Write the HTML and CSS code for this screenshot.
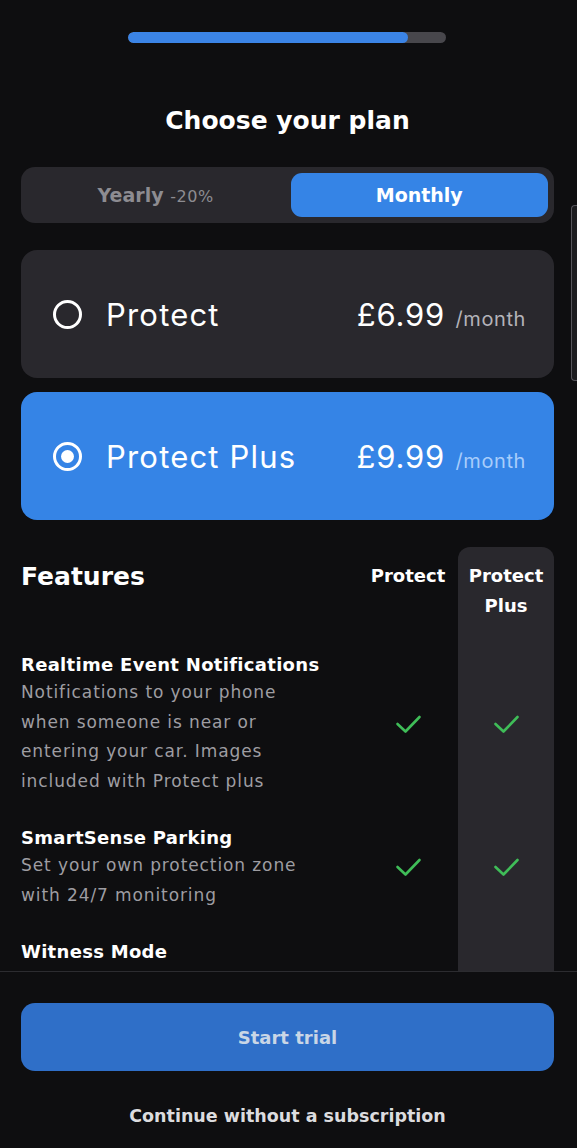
FILE: index.html
```html
<!DOCTYPE html>
<html lang="en">
<head>
    <meta charset="UTF-8" />
    <meta name="viewport" content="width=device-width, initial-scale=1.0"/>
    <title>Choose your plan</title>
    <link rel="stylesheet" href="styles.css">
</head>
<body>
<main class="screen">
    <div class="scroll-area">
        <div class="progress"><div class="progress-fill" style="width: 88%"></div></div>

        <h1>Choose your plan</h1>

        <section class="toggle">
            <button class="toggle-btn">Yearly <span class="discount">-20%</span></button>
            <button class="toggle-btn active">Monthly</button>
        </section>

        <section class="plans">
            <div class="plan">
                <span class="radio"></span>
                <span class="plan-name">Protect</span>
                <span class="plan-price">£6.99 <small>/month</small></span>
            </div>
            <div class="plan selected">
                <span class="radio"></span>
                <span class="plan-name">Protect Plus</span>
                <span class="plan-price">£9.99 <small>/month</small></span>
            </div>
        </section>

        <section class="features">
            <div class="plus-col"></div>

            <h2 class="features-title">Features</h2>
            <div class="col-head">Protect</div>
            <div class="col-head">Protect Plus</div>

            <div class="feature">
                <h3>Realtime Event Notifications</h3>
                <p>Notifications to your phone when someone is near or entering your car. Images included with Protect plus</p>
            </div>
            <div class="tick"><svg viewBox="0 0 26 20"><path d="M2 10 L10 17.5 L24 3"/></svg></div>
            <div class="tick"><svg viewBox="0 0 26 20"><path d="M2 10 L10 17.5 L24 3"/></svg></div>

            <div class="feature">
                <h3>SmartSense Parking</h3>
                <p>Set your own protection zone with 24/7 monitoring</p>
            </div>
            <div class="tick"><svg viewBox="0 0 26 20"><path d="M2 10 L10 17.5 L24 3"/></svg></div>
            <div class="tick"><svg viewBox="0 0 26 20"><path d="M2 10 L10 17.5 L24 3"/></svg></div>

            <div class="feature">
                <h3>Witness Mode</h3>
            </div>
            <div class="tick"></div>
            <div class="tick"></div>
        </section>

        <div class="scrollbar"></div>
    </div>

    <footer class="footer">
        <button class="start-btn">Start trial</button>
        <a class="skip-link">Continue without a subscription</a>
    </footer>
</main>
</body>
</html>
```

FILE: styles.css
```css
* {
    box-sizing: border-box;
    font-family: 'DejaVu Sans', sans-serif;
}
body {
    margin: 0;
    background: #0e0e10;
    color: #fff;
}
.screen {
    height: 1148px;
    display: flex;
    flex-direction: column;
    overflow: hidden;
}
.scroll-area {
    position: relative;
    flex: 1;
    overflow: hidden;
    padding: 32px 23px 0 21px;
}
.progress {
    width: 318px;
    height: 11px;
    margin-left: 107px;
    background: #48474c;
    border-radius: 6px;
    overflow: hidden;
}
.progress-fill {
    height: 100%;
    background: #3b84e6;
    border-radius: 6px;
}
h1 {
    margin: 61px 0 29px;
    text-align: center;
    font-size: 25px;
    line-height: 34px;
    font-weight: bold;
}
.toggle {
    display: grid;
    grid-template-columns: 1fr 1fr;
    gap: 6px;
    padding: 6px;
    height: 56px;
    background: #29282d;
    border-radius: 14px;
}
.toggle-btn {
    border: none;
    background: none;
    color: #8d8c91;
    font-size: 19px;
    font-weight: bold;
    border-radius: 11px;
}
.toggle-btn .discount {
    font-size: 16px;
    font-weight: normal;
    letter-spacing: 0.6px;
}
.toggle-btn.active {
    background: #3584e6;
    color: #fff;
}
.plans {
    display: flex;
    flex-direction: column;
    gap: 14px;
    margin-top: 27px;
}
.plan {
    display: flex;
    align-items: center;
    height: 128px;
    padding: 0 28px 0 32px;
    background: #29282d;
    border-radius: 16px;
}
.plan.selected {
    background: #3584e6;
}
.radio {
    width: 29px;
    height: 29px;
    border: 3px solid #fff;
    border-radius: 50%;
    margin-right: 24px;
    display: flex;
    align-items: center;
    justify-content: center;
}
.plan.selected .radio::after {
    content: "";
    width: 13px;
    height: 13px;
    background: #fff;
    border-radius: 50%;
}
.plan-name, .plan-price {
    font-family: 'Inter', sans-serif;
    font-size: 31px;
    font-weight: 400;
    letter-spacing: 0.8px;
}
.plan-name {
    flex: 1;
    letter-spacing: 1.2px;
}
.plan-price small {
    font-family: 'Inter', sans-serif;
    font-size: 20px;
    letter-spacing: 0.6px;
    color: #b4b3b9;
    margin-left: 1px;
}
.plan.selected .plan-price small {
    color: #a8cdfb;
}
.features {
    position: relative;
    display: grid;
    grid-template-columns: 1fr 96px 96px;
    column-gap: 2px;
    margin-top: 27px;
    padding-top: 14px;
}
.plus-col {
    position: absolute;
    right: 0;
    top: 0;
    width: 96px;
    height: 500px;
    background: #29282d;
    border-radius: 12px 12px 0 0;
}
.features-title {
    position: relative;
    margin: 0;
    font-size: 25px;
    font-weight: bold;
    line-height: 32px;
}
.col-head {
    position: relative;
    text-align: center;
    font-size: 18px;
    font-weight: bold;
    line-height: 30px;
    padding-bottom: 30px;
}
.feature {
    position: relative;
    padding-bottom: 28px;
}
.feature h3 {
    margin: 0;
    font-size: 18px;
    font-weight: bold;
    line-height: 27px;
    letter-spacing: 0.3px;
}
.feature p {
    margin: 0;
    max-width: 300px;
    font-size: 17px;
    line-height: 29.5px;
    letter-spacing: 0.9px;
    color: #9e9da2;
}
.tick {
    position: relative;
    display: flex;
    align-items: center;
    justify-content: center;
    padding-bottom: 28px;
}
.tick svg {
    width: 27px;
    height: 20px;
    fill: none;
    stroke: #3fbd58;
    stroke-width: 2.6;
    stroke-linecap: round;
    stroke-linejoin: round;
}
.scrollbar {
    position: absolute;
    right: 0;
    top: 205px;
    width: 6px;
    height: 176px;
    border: 1px solid #55545a;
    border-right: none;
    border-radius: 4px 0 0 4px;
    background: #1c1c1f;
}
.footer {
    border-top: 1px solid #2c2c30;
    padding: 31px 23px 0 21px;
    height: 177px;
    display: flex;
    flex-direction: column;
    align-items: center;
}
.start-btn {
    width: 100%;
    height: 68px;
    border: none;
    border-radius: 14px;
    background: #2f6fc8;
    color: #c9d6e6;
    font-size: 18px;
    font-weight: bold;
}
.skip-link {
    margin-top: 35px;
    font-size: 17.5px;
    font-weight: bold;
    color: #dcdcdf;
}
```
